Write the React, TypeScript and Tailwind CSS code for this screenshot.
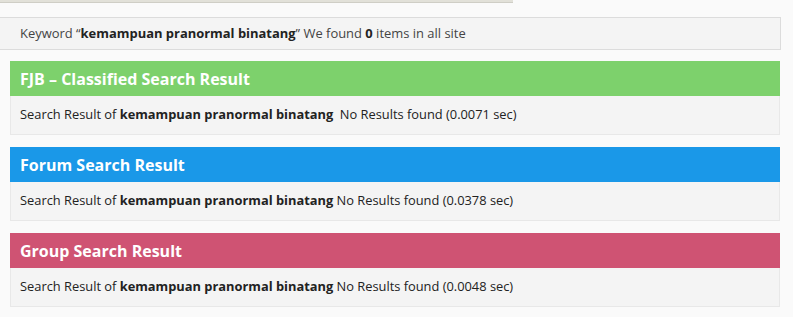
const font = { fontFamily: '"Open Sans", "Noto Sans", sans-serif' };

type Section = {
  title: string;
  color: string;
  time: string;
  extraSpace?: boolean;
};

const sections: Section[] = [
  { title: 'FJB – Classified Search Result', color: 'bg-[#7dd16c]', time: '0.0071', extraSpace: true },
  { title: 'Forum Search Result', color: 'bg-[#1a98e8]', time: '0.0378' },
  { title: 'Group Search Result', color: 'bg-[#cf5373]', time: '0.0048' },
];

const keyword = 'kemampuan pranormal binatang';

function ResultCard({ section }: { section: Section }) {
  return (
    <div className="ml-[10px] w-[770px]">
      <div className={`${section.color} h-[35px] flex items-center px-[10px]`}>
        <h2 className="text-[16px] font-bold text-white leading-none">{section.title}</h2>
      </div>
      <div className="h-[39px] bg-[#f4f4f4] border border-t-0 border-[#e8e8e8] flex items-center px-[9px] text-[12.85px] text-[#222]">
        <span>
          Search Result of <b>{keyword}</b>
          {section.extraSpace ? '\u00a0 ' : ' '}
          No Results found ({section.time} sec)
        </span>
      </div>
    </div>
  );
}

export default function App() {
  return (
    <div className="w-[793px] h-[317px] bg-[#fafafa] overflow-hidden" style={font}>
      {/* top strip */}
      <div className="w-[513px] h-[3px] bg-[#e2e1d9] border-b border-[#cfcec6]" />

      {/* keyword summary */}
      <div className="mt-[14px] w-[781px] h-[33px] bg-[#f4f4f4] border border-l-0 border-[#dcdcdc] flex items-center pl-[20px] text-[12.95px] text-[#444]">
        <span>
          Keyword “<b className="text-[#222]">{keyword}</b>” We found <b className="text-[#222]">0</b> items in all site
        </span>
      </div>

      <div className="mt-[11px] flex flex-col gap-[12px]">
        {sections.map((s) => (
          <ResultCard key={s.title} section={s} />
        ))}
      </div>
    </div>
  );
}
